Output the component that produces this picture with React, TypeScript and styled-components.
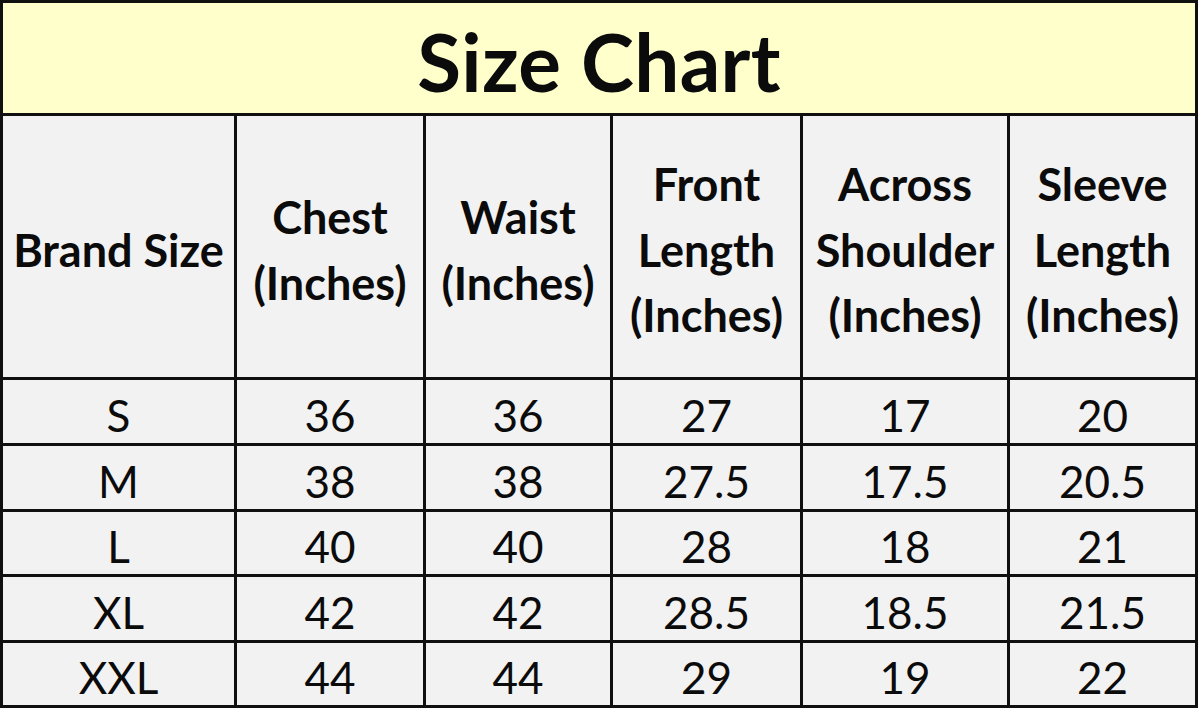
import styled, { createGlobalStyle } from 'styled-components';

const GlobalStyle = createGlobalStyle`
	html, body {
		margin: 0;
		padding: 0;
		background: #ffffff;
	}
	body {
		font-family: 'Lato', 'Liberation Sans', sans-serif;
		color: #0b0b0b;
	}
`;

const headers = [
	['Brand Size'],
	['Chest', '(Inches)'],
	['Waist', '(Inches)'],
	['Front', 'Length', '(Inches)'],
	['Across', 'Shoulder', '(Inches)'],
	['Sleeve', 'Length', '(Inches)'],
];

const rows = [
	['S', '36', '36', '27', '17', '20'],
	['M', '38', '38', '27.5', '17.5', '20.5'],
	['L', '40', '40', '28', '18', '21'],
	['XL', '42', '42', '28.5', '18.5', '21.5'],
	['XXL', '44', '44', '29', '19', '22'],
];

export default function App() {
	return (
		<>
			<GlobalStyle />
			<Chart>
				<Title>Size Chart</Title>
				{headers.map((lines, i) => (
					<HeadCell key={i}>
						<HeadText>
							{lines.map((l, j) => (
								<span key={j}>{l}</span>
							))}
						</HeadText>
					</HeadCell>
				))}
				{rows.map((row, r) =>
					row.map((v, c) => <DataCell key={`${r}-${c}`}>{v}</DataCell>)
				)}
			</Chart>
		</>
	);
}

const Chart = styled.div`
	display: grid;
	width: 1198px;
	box-sizing: border-box;
	grid-template-columns: 231px 186px 184px 187px 204px 185px;
	grid-template-rows: 110px 261px 63px 63px 62px 63px 62px;
	gap: 3px;
	padding: 3px;
	background: #101010;
`;

const Title = styled.div`
	grid-column: 1 / -1;
	display: flex;
	align-items: center;
	justify-content: center;
	padding-top: 6px;
	background: #ffffcc;
	font-size: 80px;
	font-weight: 700;
	letter-spacing: 0.3px;
`;

const HeadCell = styled.div`
	display: flex;
	align-items: center;
	justify-content: center;
	padding-top: 8px;
	background: #f2f2f2;
`;

const HeadText = styled.div`
	display: flex;
	flex-direction: column;
	align-items: center;
	font-size: 45px;
	font-weight: 700;
	line-height: 65.5px;
	white-space: nowrap;
`;

const DataCell = styled.div`
	display: flex;
	align-items: center;
	justify-content: center;
	padding-top: 6px;
	background: #f2f2f2;
	font-size: 44px;
	font-weight: 400;
`;
